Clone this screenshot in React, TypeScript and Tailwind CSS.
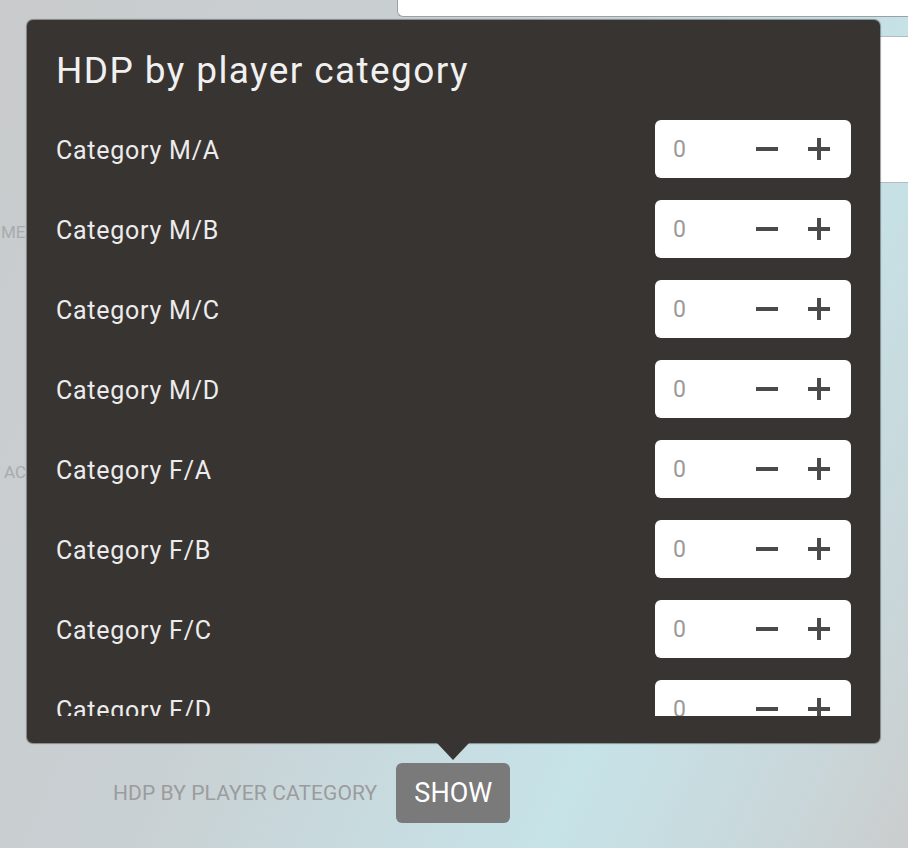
import React from "react"

const categories = ["M/A", "M/B", "M/C", "M/D", "F/A", "F/B", "F/C", "F/D"]

const font = { fontFamily: "Roboto, 'Liberation Sans', sans-serif" }

const Stepper = ({ value }: { value: number }) => {
  return (
    <div className="flex items-center w-[196px] h-[58px] bg-white rounded-md pl-[18px] pr-[21px] shrink-0">
      <span className="text-[23px] text-[#9a9a9a] leading-none">{value}</span>
      <div className="ml-auto flex items-center gap-[30px]">
        <svg width="22" height="22" viewBox="0 0 22 22">
          <rect x="0" y="9" width="22" height="4" fill="#4a4a4a" />
        </svg>
        <svg width="22" height="22" viewBox="0 0 22 22">
          <rect x="0" y="9" width="22" height="4" fill="#4a4a4a" />
          <rect x="9" y="0" width="4" height="22" fill="#4a4a4a" />
        </svg>
      </div>
    </div>
  )
}

export default function App() {
  return (
    <div
      className="relative w-[908px] h-[848px] overflow-hidden bg-[linear-gradient(115deg,#c9cbcc_0%,#c9d0d3_40%,#c6e3e8_72%,#c9d6d9_90%,#cbcdcd_100%)]"
      style={font}
    >
      {/* page behind the popover */}
      <div className="ml-[397px] h-[17px] bg-white border-l border-b border-[#9aa0a4] rounded-bl-md" />
      <div className="ml-[880px] mt-[19px] h-[147px] bg-white border-y border-[#b5bcc0]" />
      <div className="mt-[39px] pl-[1px] h-[20px] leading-[20px] text-[17px] text-[#a7abae]">ME</div>
      <div className="mt-[220px] pl-[4px] h-[20px] leading-[20px] text-[17px] text-[#a7abae]">AC</div>
      <div className="mt-[281px] pl-[113px] flex items-center gap-[19px]">
        <span className="text-[21px] text-[#9b9c9d] tracking-[0.1px] pt-[2px]">HDP BY PLAYER CATEGORY</span>
        <button className="w-[114px] h-[60px] rounded-md bg-[#7a7a7a] text-white text-[27px] cursor-default">
          SHOW
        </button>
      </div>

      {/* popover */}
      <div className="absolute left-[27px] top-[20px] w-[853px] h-[723px] bg-[#383431] rounded-md shadow-[0_0_1px_1px_rgba(60,60,60,0.5)] flex flex-col pl-[29px] pr-[29px] pb-[27px]">
        <h2 className="pt-[29px] h-[73px] leading-[44px] text-[37px] font-normal tracking-[1.4px] text-[#f0f0f0]">
          HDP by player category
        </h2>
        <div className="mt-[27px] flex-1 overflow-hidden flex flex-col gap-[22px]">
          {categories.map((c) => (
            <div key={c} className="flex items-center justify-between">
              <span className="text-[25px] text-[#ececec] tracking-[0.75px] pt-[4px]">Category {c}</span>
              <Stepper value={0} />
            </div>
          ))}
        </div>
        <div className="absolute left-[410px] top-full w-0 h-0 border-l-[16px] border-r-[16px] border-t-[17px] border-l-transparent border-r-transparent border-t-[#383431]" />
      </div>
    </div>
  )
}
